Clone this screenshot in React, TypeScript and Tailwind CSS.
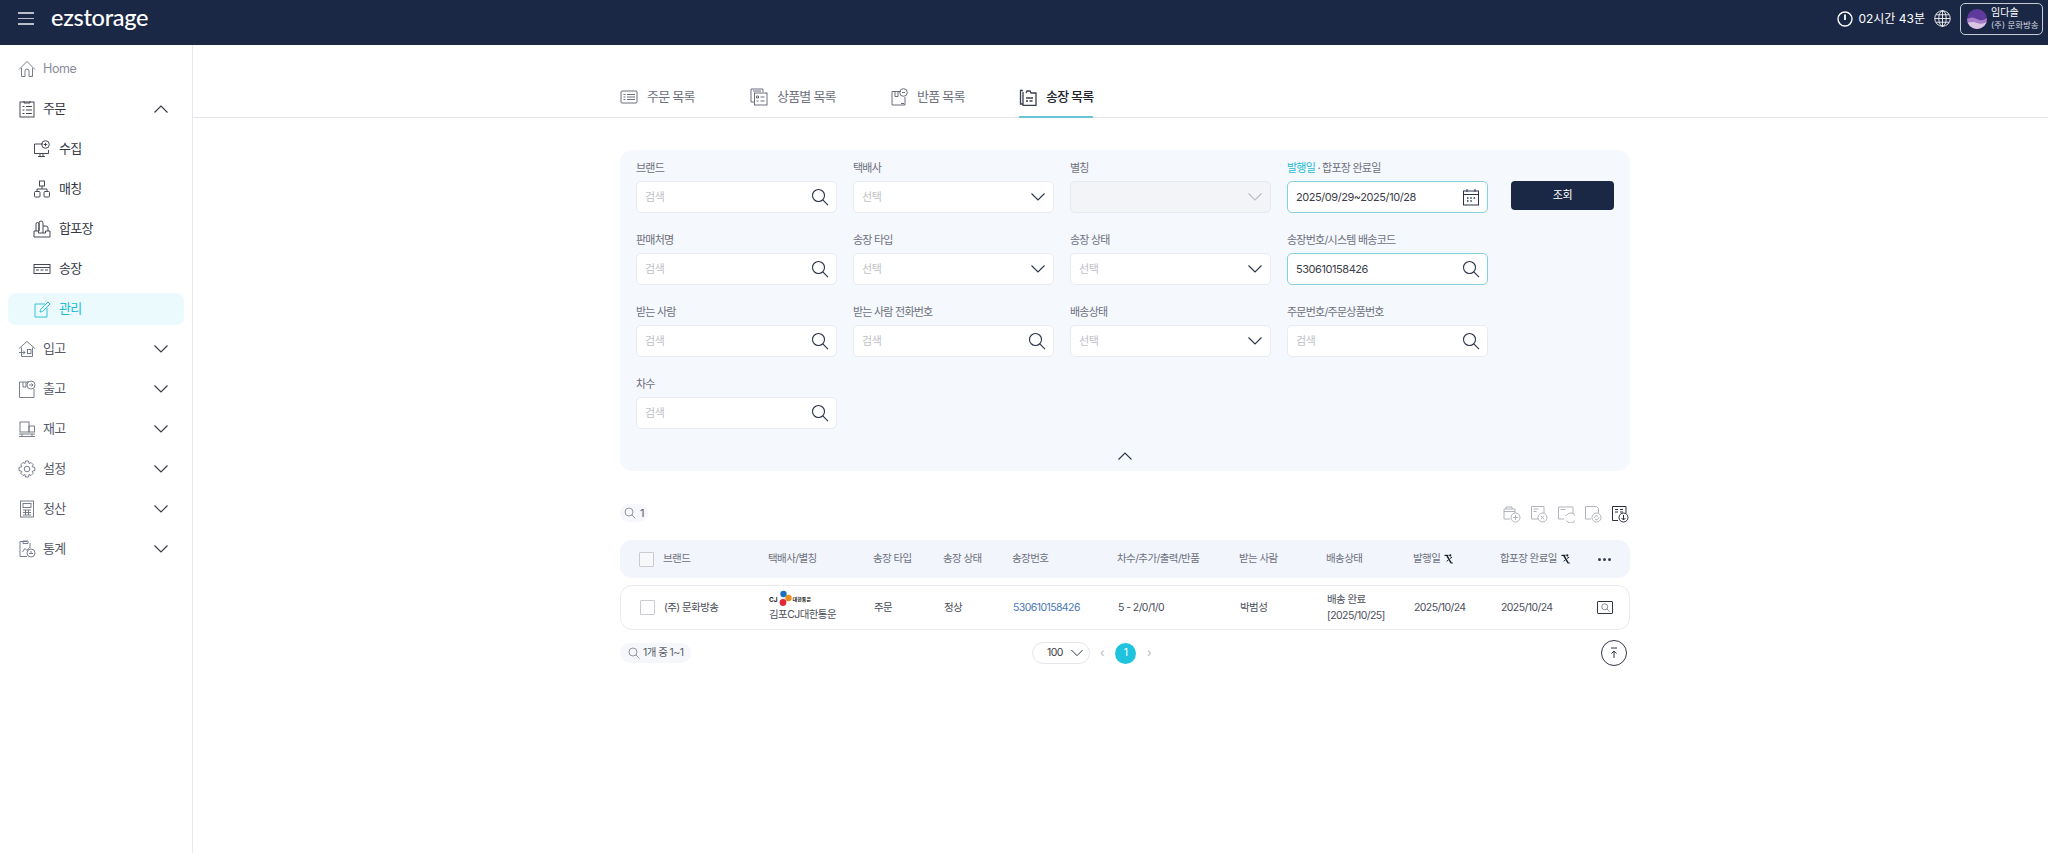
import React from 'react'

const font = 'font-["Inter","Noto_Sans_CJK_KR",sans-serif]'
const rowCols = 'grid grid-cols-[24px_105px_105px_70px_69px_105px_122px_87px_87px_87px_97px_1fr] items-center pl-[19px]'

type IconProps = { className?: string }

const Chevron = ({ up, className = '' }: { up?: boolean; className?: string }) => (
  <svg viewBox="0 0 16 10" className={`w-4 h-[10px] ${className}`} fill="none" stroke="currentColor" strokeWidth="1.1">
    <path d={up ? 'M1.5 8.5 8 2l6.5 6.5' : 'M1.5 1.5 8 8l6.5-6.5'} />
  </svg>
)

const Search = ({ className = 'w-[18px] h-[18px] text-[#2a3247]' }: IconProps) => (
  <svg viewBox="0 0 18 18" className={className} fill="none" stroke="currentColor" strokeWidth="1.1">
    <circle cx="7.5" cy="7.5" r="6" />
    <path d="m11.8 11.8 5.2 5.4" />
  </svg>
)

const Stroke = ({ children, className = 'w-[18px] h-[18px]' }: { children: React.ReactNode; className?: string }) => (
  <svg viewBox="0 0 18 18" className={className} fill="none" stroke="currentColor" strokeWidth="0.9">
    {children}
  </svg>
)

const icons: Record<string, React.ReactNode> = {
  home: <path d="M1 9.5 9 1.5l8 8M3.5 8v8.5h3.5v-5.5a2 2 0 0 1 4 0v5.5h3.5V8" />,
  order: <><rect x="2" y="2" width="14" height="15" /><path d="M6 1v2h6V1M4.500 6.500h2M8 6.500h6M4.500 10h2M8 10h6M4.500 13.500h2M8 13.500h6" /></>,
  collect: <><path d="M10 4H1.500v9.500h14V10M5 16.500h7M7 13.500v3M10 13.500v3" /><circle cx="12.500" cy="4.500" r="3.800" /><path d="M12.500 2.800v3.400M10.800 4.500h3.400" /></>,
  match: <><rect x="6.500" y="1" width="5" height="5" /><rect x="1.500" y="11.500" width="5.500" height="5.500" rx="1" /><rect x="11" y="11.500" width="5.500" height="5.500" rx="1" /><path d="M9 6v3M4 11.500V9h10v2.500" /></>,
  pack: <><path d="M1 11h4.500v2h7v-2H17v6H1zM3 11V4a1.500 1.500 0 0 1 3 0v7M6 11V3a2 2 0 0 1 4 0v10M10 6h3a2 2 0 0 1 2 2v3" /></>,
  invoice: <><rect x="1" y="4.500" width="16" height="9" /><path d="M1 7.500h16M3 10h3M7.500 10h3M12 10h3" /></>,
  manage: <><path d="M12 4H2v13h12V8" /><path d="m7 12 .5-2.500L15 2l2 2-7.500 7.500z" /></>,
  inbound: <><path d="M1 8.500 9 1.500l8 7M3.500 7.500v9h11v-9" /><path d="M1 12.500h6M5 10.500l2 2-2 2" /><rect x="9.500" y="9.500" width="3.500" height="4" /></>,
  outbound: <><path d="M11 2H1.500v15.500h14.500V9" /><circle cx="13" cy="5" r="4" /><path d="M11 5h4M13.500 3.500 15 5l-1.500 1.500M5 2v5h3V2" /></>,
  stock: <><rect x="2" y="2" width="9" height="10" /><rect x="11" y="6" width="5.500" height="6" /><path d="M1 14h16M1 16.500h16M4 14v2.500M14 14v2.500" /></>,
  gear: <><circle cx="9" cy="9" r="2.800" /><path d="M7.500 1h3l.5 2.500 2-1 2.200 2.200-1 2 2.600.8v3l-2.600.8 1 2-2.200 2.200-2-1-.5 2.500h-3L7 14.500l-2 1-2.200-2.200 1-2L1 10.500v-3l2.800-.8-1-2L5 2.500l2 1z" /></>,
  calc: <><rect x="2.500" y="1" width="13" height="16" /><rect x="5" y="3.500" width="8" height="4" /><path d="M5 10h8M5 12.500h8M5 15h8M7.500 10v5M10.500 10v5" /></>,
  stats: <><path d="M9 1.500H2v15h7M5 1h5v2.500H5z" /><path d="M12 3v5M4.500 12l2.500-3.500 2 2 2.500-3" /><circle cx="13" cy="13" r="4" /><path d="M11 13.500h4M12 12h2" /></>,
  tabOrder: <><rect x="1" y="3" width="16" height="12" rx="1" /><path d="M3.500 6.500h2M7 6.500h8M3.500 9h2M7 9h8M3.500 11.500h2M7 11.500h8" /></>,
  tabItem: <><path d="M4 14H1V1h12v3" /><rect x="4.500" y="5" width="12.500" height="12" /><path d="M3 3h8M6.500 8h2v2h-2zM10.500 9h4M6.500 13h2M10.500 13h4" /></>,
  tabReturn: <><path d="M11 3.500H2v13.500h13V9" /><path d="M5 3.500v5h3v-5M11 15.500h3" /><circle cx="13.500" cy="4.500" r="3.800" /><path d="M12 4.500h3" /></>,
  tabInvoice: <><path d="M4 2.500H1.500V16H4" strokeWidth="1.300" /><path d="M4 4v13.500h13V5h-5L11 3H8L7 5" strokeWidth="1.300" /><path d="M7 10h7M7 13h2M10.500 13h3" strokeWidth="1.300" /></>,
  docPlus: <><path d="M7 14H1V4h11v4" /><path d="M1 6.500h11M3 4V2h6v2" /><circle cx="12.500" cy="12.500" r="4.500" /><path d="M12.500 10v5M10 12.500h5" /></>,
  docX: <><path d="M8 14H1.500V1.500h12.500v7" /><path d="M3.500 4h5M3.500 6.500h3" /><circle cx="12.500" cy="12.500" r="4.500" /><path d="m10.800 10.800 3.400 3.400M14.200 10.800l-3.400 3.400" /></>,
  docBack: <><path d="M7 14H1.500V2H16v7" /><path d="M3.500 4.500h5" /><path d="M8.500 10.500h1a5 5 0 1 1 0 5" /></>,
  docSync: <><path d="M7 14H1.500V1.500h11l2 2v5" /><circle cx="12.500" cy="12.500" r="4.500" /><path d="M10.500 13a2 2 0 0 1 3.500-1.500M14.500 12.500a2 2 0 0 1-3.500 1.500" /></>,
}

const Icon = ({ name, className = 'text-[#4b5060]' }: { name: string; className?: string }) => (
  <span className={`shrink-0 ${className}`}>
    <Stroke>{icons[name]}</Stroke>
  </span>
)

const SortIcon = () => (
  <svg viewBox="0 0 10 11" className="w-[9px] h-[10px] text-[#1a1f2e] ml-[4px] inline-block" fill="none" stroke="currentColor">
    <path d="M.5 1.500h4.500" strokeWidth="1.300" />
    <path d="M3 1.500 8 10" strokeWidth="1.600" />
    <path d="M6.500 5 9 3.500M5 6.500 3 8M8 10h1.800" strokeWidth="1.100" />
    <circle cx="7" cy="1.500" r="1.200" fill="currentColor" stroke="none" />
  </svg>
)

const menu = [
  { icon: 'order', label: '주문', open: true },
  { icon: 'collect', label: '수집', sub: true },
  { icon: 'match', label: '매칭', sub: true },
  { icon: 'pack', label: '합포장', sub: true },
  { icon: 'invoice', label: '송장', sub: true },
  { icon: 'manage', label: '관리', sub: true, active: true },
  { icon: 'inbound', label: '입고' },
  { icon: 'outbound', label: '출고' },
  { icon: 'stock', label: '재고' },
  { icon: 'gear', label: '설정' },
  { icon: 'calc', label: '정산' },
  { icon: 'stats', label: '통계' },
]

function Sidebar() {
  return (
    <aside className="w-[193px] shrink-0 border-r border-[#e8e9ef] pt-[4px] px-2">
      <div className="flex items-center h-10 pl-[10px] gap-[7px] text-[12.500px] tracking-[-0.03em] text-[#8a8d99] mb-[4px]">
        <Icon name="home" className="text-[#6c7080]" />
        Home
      </div>
      <div className="flex flex-col gap-2">
        {menu.map((m, i) => (
          <div
            key={i}
            className={`flex items-center h-[32px] rounded-lg text-[13px] tracking-[-0.05em] ${m.sub ? 'pl-[25px] gap-[8px]' : 'pl-[10px] gap-[7px]'} ${m.active ? 'bg-[#ebfafd] text-[#22bcd6]' : m.sub || m.open ? 'text-[#333744]' : 'text-[#565a68]'}`}
          >
            <Icon name={m.icon} className={m.active ? 'text-[#22bcd6]' : m.sub || m.open ? 'text-[#333744]' : 'text-[#6c7080]'} />
            <span className={m.sub ? '' : 'flex-1'}>{m.label}</span>
            {!m.sub && <Chevron up={m.open} className="mr-[15px] text-[#333744]" />}
          </div>
        ))}
      </div>
    </aside>
  )
}

function Header() {
  return (
    <header className="h-[45px] bg-[#1b2845] flex items-center pl-[18px] pr-[5px] pb-[8px] text-white">
      <div className="flex flex-col gap-[4px] w-4">
        <span className="h-[1.500px] bg-[#b9bfca]" />
        <span className="h-[1.500px] bg-[#b9bfca]" />
        <span className="h-[1.500px] bg-[#b9bfca]" />
      </div>
      <span className='ml-[17px] text-[23.500px] leading-none font-medium tracking-[-0.3px] font-["Lato",sans-serif] -mt-[2px]'>ezstorage</span>
      <div className="ml-auto flex items-center">
        <svg viewBox="0 0 16 16" className="w-4 h-4" fill="none" stroke="currentColor" strokeWidth="1.400">
          <circle cx="8" cy="8" r="7" />
          <path d="M8 3.500v5.500" strokeWidth="1.800" />
        </svg>
        <span className="ml-[5px] text-[12px]">02시간 43분</span>
        <svg viewBox="0 0 16 16" className="w-[17px] h-[17px] ml-[9px]" fill="none" stroke="currentColor" strokeWidth="0.800">
          <circle cx="8" cy="8" r="7.300" />
          <ellipse cx="8" cy="8" rx="3.500" ry="7.300" />
          <path d="M8 .7v14.600M.7 8h14.600M1.700 4.500h12.600M1.700 11.500h12.600" />
        </svg>
        <div className="ml-[9px] w-[83px] h-8 border border-[#c6cbd4] rounded-[5px] flex items-center pl-[6px] gap-[4px]">
          <svg viewBox="0 0 20 20" className="w-5 h-5 shrink-0">
            <defs>
              <clipPath id="avatarClip"><circle cx="10" cy="10" r="10" /></clipPath>
            </defs>
            <g clipPath="url(#avatarClip)">
              <rect width="20" height="20" fill="#5e3a9c" />
              <path d="M0 10q5-3 10 0t10-1v12H0z" fill="#a57cc8" />
              <path d="M0 14q5-2 10 0t10-1v8H0z" fill="#d9c6e3" />
            </g>
          </svg>
          <div className="leading-[13px]">
            <div className="text-[10px]">임다솔</div>
            <div className="text-[8.500px] whitespace-nowrap text-[#d8dbe2]">(주) 문화방송</div>
          </div>
        </div>
      </div>
    </header>
  )
}

const tabs = [
  { icon: 'tabOrder', label: '주문 목록', w: 'w-[130px]' },
  { icon: 'tabItem', label: '상품별 목록', w: 'w-[140px]' },
  { icon: 'tabReturn', label: '반품 목록', w: 'w-[129px]' },
  { icon: 'tabInvoice', label: '송장 목록', w: 'w-[73px]', active: true },
]

function Tabs() {
  return (
    <div className="border-b border-[#e3e5ea] h-[73px] pl-[427px] flex items-end">
      {tabs.map(t => (
        <div key={t.label} className={t.w}>
          <div className={`h-[38px] w-fit flex items-center gap-[9px] text-[13px] tracking-[-0.06em] whitespace-nowrap -mb-px pb-[3px] border-b-2 ${t.active ? 'border-[#6cc5d4] text-[#22252f] font-medium' : 'border-transparent text-[#6e717d]'}`}>
            <Icon name={t.icon} className={t.active ? 'text-[#3a3f4e]' : 'text-[#5b5f6d]'} />
            {t.label}
          </div>
        </div>
      ))}
    </div>
  )
}

function Field({ label, kind, value, disabled, focus }: { label: React.ReactNode; kind: 'search' | 'select' | 'date'; value?: string; disabled?: boolean; focus?: boolean }) {
  return (
    <div className="h-[72px]">
      <div className="h-[31px] pt-[11px] text-[11px] tracking-[-0.07em] leading-[14px] text-[#6e717d] whitespace-nowrap">{label}</div>
      <div className={`h-8 rounded-[5px] border flex items-center pl-[8px] pr-[7px] text-[11px] tracking-[-0.04em] ${focus ? 'border-[#7fd3e0] bg-white text-[#3b3e4a]' : disabled ? 'border-[#e8e9ee] bg-[#f3f4f7]' : 'border-[#eaebf0] bg-white text-[#bfc1c8]'}`}>
        <span className="flex-1">{value ?? (disabled ? '' : kind === 'search' ? '검색' : '선택')}</span>
        {kind === 'search' && <Search />}
        {kind === 'select' && <Chevron className={disabled ? 'text-[#b9bbc3]' : 'text-[#2a3247]'} />}
        {kind === 'date' && (
          <svg viewBox="0 0 18 18" className="w-[18px] h-[18px] text-[#2a3247]" fill="none" stroke="currentColor" strokeWidth="1">
            <rect x="1.500" y="3" width="15" height="14" />
            <path d="M1.500 6.500h15M5 1v3M13 1v3" />
            <path d="M5 10h1.500M8.300 10h1.500M11.600 10h1.500M5 13h1.500M8.300 13h1.500" strokeWidth="1.400" />
          </svg>
        )}
      </div>
    </div>
  )
}

function Filters() {
  return (
    <section className="bg-[#f5f8fc] rounded-xl h-[321px] px-4">
      <div className="grid grid-cols-[201px_201px_201px_201px_103px] gap-x-4">
        <Field label="브랜드" kind="search" />
        <Field label="택배사" kind="select" />
        <Field label="별칭" kind="select" disabled />
        <Field label={<><span className="text-[#22bcd6]">발행일</span> · 합포장 완료일</>} kind="date" value="2025/09/29~2025/10/28" focus />
        <div className="pt-[31px] pl-[7px]">
          <button className="w-[103px] h-[29px] rounded-[4px] bg-[#1b2845] text-white text-[11px] tracking-[-0.04em]">조회</button>
        </div>
        <Field label="판매처명" kind="search" />
        <Field label="송장 타입" kind="select" />
        <Field label="송장 상태" kind="select" />
        <Field label="송장번호/시스템 배송코드" kind="search" value="530610158426" focus />
        <div />
        <Field label="받는 사람" kind="search" />
        <Field label="받는 사람 전화번호" kind="search" />
        <Field label="배송상태" kind="select" />
        <Field label="주문번호/주문상품번호" kind="search" />
        <div />
        <Field label="차수" kind="search" />
      </div>
      <div className="flex justify-center pt-[13px]">
        <Chevron up className="text-[#2a3247]" />
      </div>
    </section>
  )
}

function CjLogo() {
  return (
    <div className="flex items-center h-[17px] text-[#222] tracking-normal">
      <span className="text-[6.500px] font-bold leading-none mt-[3px]">CJ</span>
      <svg viewBox="0 0 14 17" className="w-[14px] h-[17px]">
        <circle cx="5.500" cy="4" r="3.200" fill="#1b6fc2" />
        <circle cx="10.500" cy="8" r="3.200" fill="#f08c1a" />
        <circle cx="5" cy="12.500" r="3.400" fill="#e2283a" />
      </svg>
      <span className="text-[5px] leading-none font-semibold mt-[1px] ml-px">대한통운</span>
    </div>
  )
}

function Table() {
  return (
    <section className="text-[10.500px] tracking-[-0.055em]">
      <div className="h-[69px] flex items-start pt-[33px] justify-between">
        <div className="h-[18px] rounded-full bg-[#f5f7fa] flex items-center px-[4px] gap-[4px] text-[#5a5d69] text-[11px]">
          <Search className="w-3 h-3 text-[#6e717d]" />
          1
        </div>
        <div className="flex items-center gap-[9px] mt-[1px] pr-[1px]">
          <Icon name="docPlus" className="text-[#a8abb3]" />
          <Icon name="docX" className="text-[#a8abb3]" />
          <Icon name="docBack" className="text-[#a8abb3]" />
          <Icon name="docSync" className="text-[#a8abb3]" />
          <svg viewBox="0 0 18 18" className="w-[18px] h-[18px] text-[#2b3040]" fill="none" stroke="currentColor" strokeWidth="1">
            <path d="M7 15.500H1.500V1.500h13.500v7" />
            <path d="M4 4.500h3M9 4.500h3M4 7h3M9 7h3" />
            <circle cx="12.500" cy="12.500" r="4.500" />
            <path d="M12.500 10v5M10.500 13l2 2 2-2" />
          </svg>
        </div>
      </div>

      <div className={`${rowCols} h-[38px] rounded-xl bg-[#f2f5fc] text-[#6e717d]`}>
        <span className="w-[15px] h-[15px] border border-[#c9cbd1] bg-[#f7f8fa] rounded-[1px]" />
        <span>브랜드</span>
        <span>택배사/별칭</span>
        <span>송장 타입</span>
        <span>송장 상태</span>
        <span>송장번호</span>
        <span>차수/추가/출력/반품</span>
        <span>받는 사람</span>
        <span>배송상태</span>
        <span className="flex items-center">발행일<SortIcon /></span>
        <span className="flex items-center">합포장 완료일<SortIcon /></span>
        <span className="flex gap-[2px] pl-[1px]">
          <i className="w-[3px] h-[3px] rounded-full bg-[#3a3f4e]" />
          <i className="w-[3px] h-[3px] rounded-full bg-[#3a3f4e]" />
          <i className="w-[3px] h-[3px] rounded-full bg-[#3a3f4e]" />
        </span>
      </div>

      <div className={`${rowCols} h-[45px] mt-[7px] rounded-xl border border-[#e9eaef] text-[#4b4e5a]`}>
        <span className="w-[15px] h-[15px] border border-[#c9cbd1] rounded-[1px]" />
        <span>(주) 문화방송</span>
        <div className="-mt-[4px]">
          <CjLogo />
          <div className="leading-[13px] mt-[1px]">김포CJ대한통운</div>
        </div>
        <span>주문</span>
        <span>정상</span>
        <span className="text-[#4a78b5]">530610158426</span>
        <span>5 - 2/0/1/0</span>
        <span>박범성</span>
        <div className="leading-[16px]">배송 완료<br />[2025/10/25]</div>
        <span>2025/10/24</span>
        <span>2025/10/24</span>
        <span className="w-[16px] h-[13px] -ml-[1px] border border-[#333744] rounded-[1px] flex items-center justify-center">
          <Search className="w-[9px] h-[9px] text-[#333744]" />
        </span>
      </div>

      <div className="h-[46px] flex items-center justify-between relative">
        <div className="h-[20px] rounded-full bg-[#f5f7fa] flex items-center px-2 gap-[3px] text-[#5a5d69]">
          <Search className="w-3 h-3 text-[#6e717d]" />
          1개 중 1~1
        </div>
        <div className="absolute left-[412px] top-[12px] flex items-center text-[#3b3e4a]">
          <div className="w-[58px] h-[22px] rounded-full border border-[#e6e7ec] flex items-center pl-[14px] gap-[7px]">
            100
            <Chevron className="w-[14px] h-[8px] text-[#2a3247]" />
          </div>
          <span className="ml-[10px] text-[#b5b7bf] text-[12px]">‹</span>
          <span className="ml-[11px] w-[21px] h-[21px] rounded-full bg-[#1fc3dd] text-white text-[10.500px] flex items-center justify-center">1</span>
          <span className="ml-[11px] text-[#b5b7bf] text-[12px]">›</span>
        </div>
        <button className="mr-[3px] w-[26px] h-[26px] rounded-full border border-[#333744] flex items-center justify-center">
          <svg viewBox="0 0 12 12" className="w-3 h-3 text-[#333744]" fill="none" stroke="currentColor" strokeWidth="1">
            <path d="M3 1h6M6 11V4M3.500 6.500 6 4l2.500 2.500" />
          </svg>
        </button>
      </div>
    </section>
  )
}

export default function App() {
  return (
    <div className={`min-h-[853px] bg-white ${font}`}>
      <Header />
      <div className="flex h-[808px]">
        <Sidebar />
        <main className="flex-1">
          <Tabs />
          <div className="pl-[427px] pt-[32px] w-[1437px]">
            <Filters />
            <Table />
          </div>
        </main>
      </div>
    </div>
  )
}
